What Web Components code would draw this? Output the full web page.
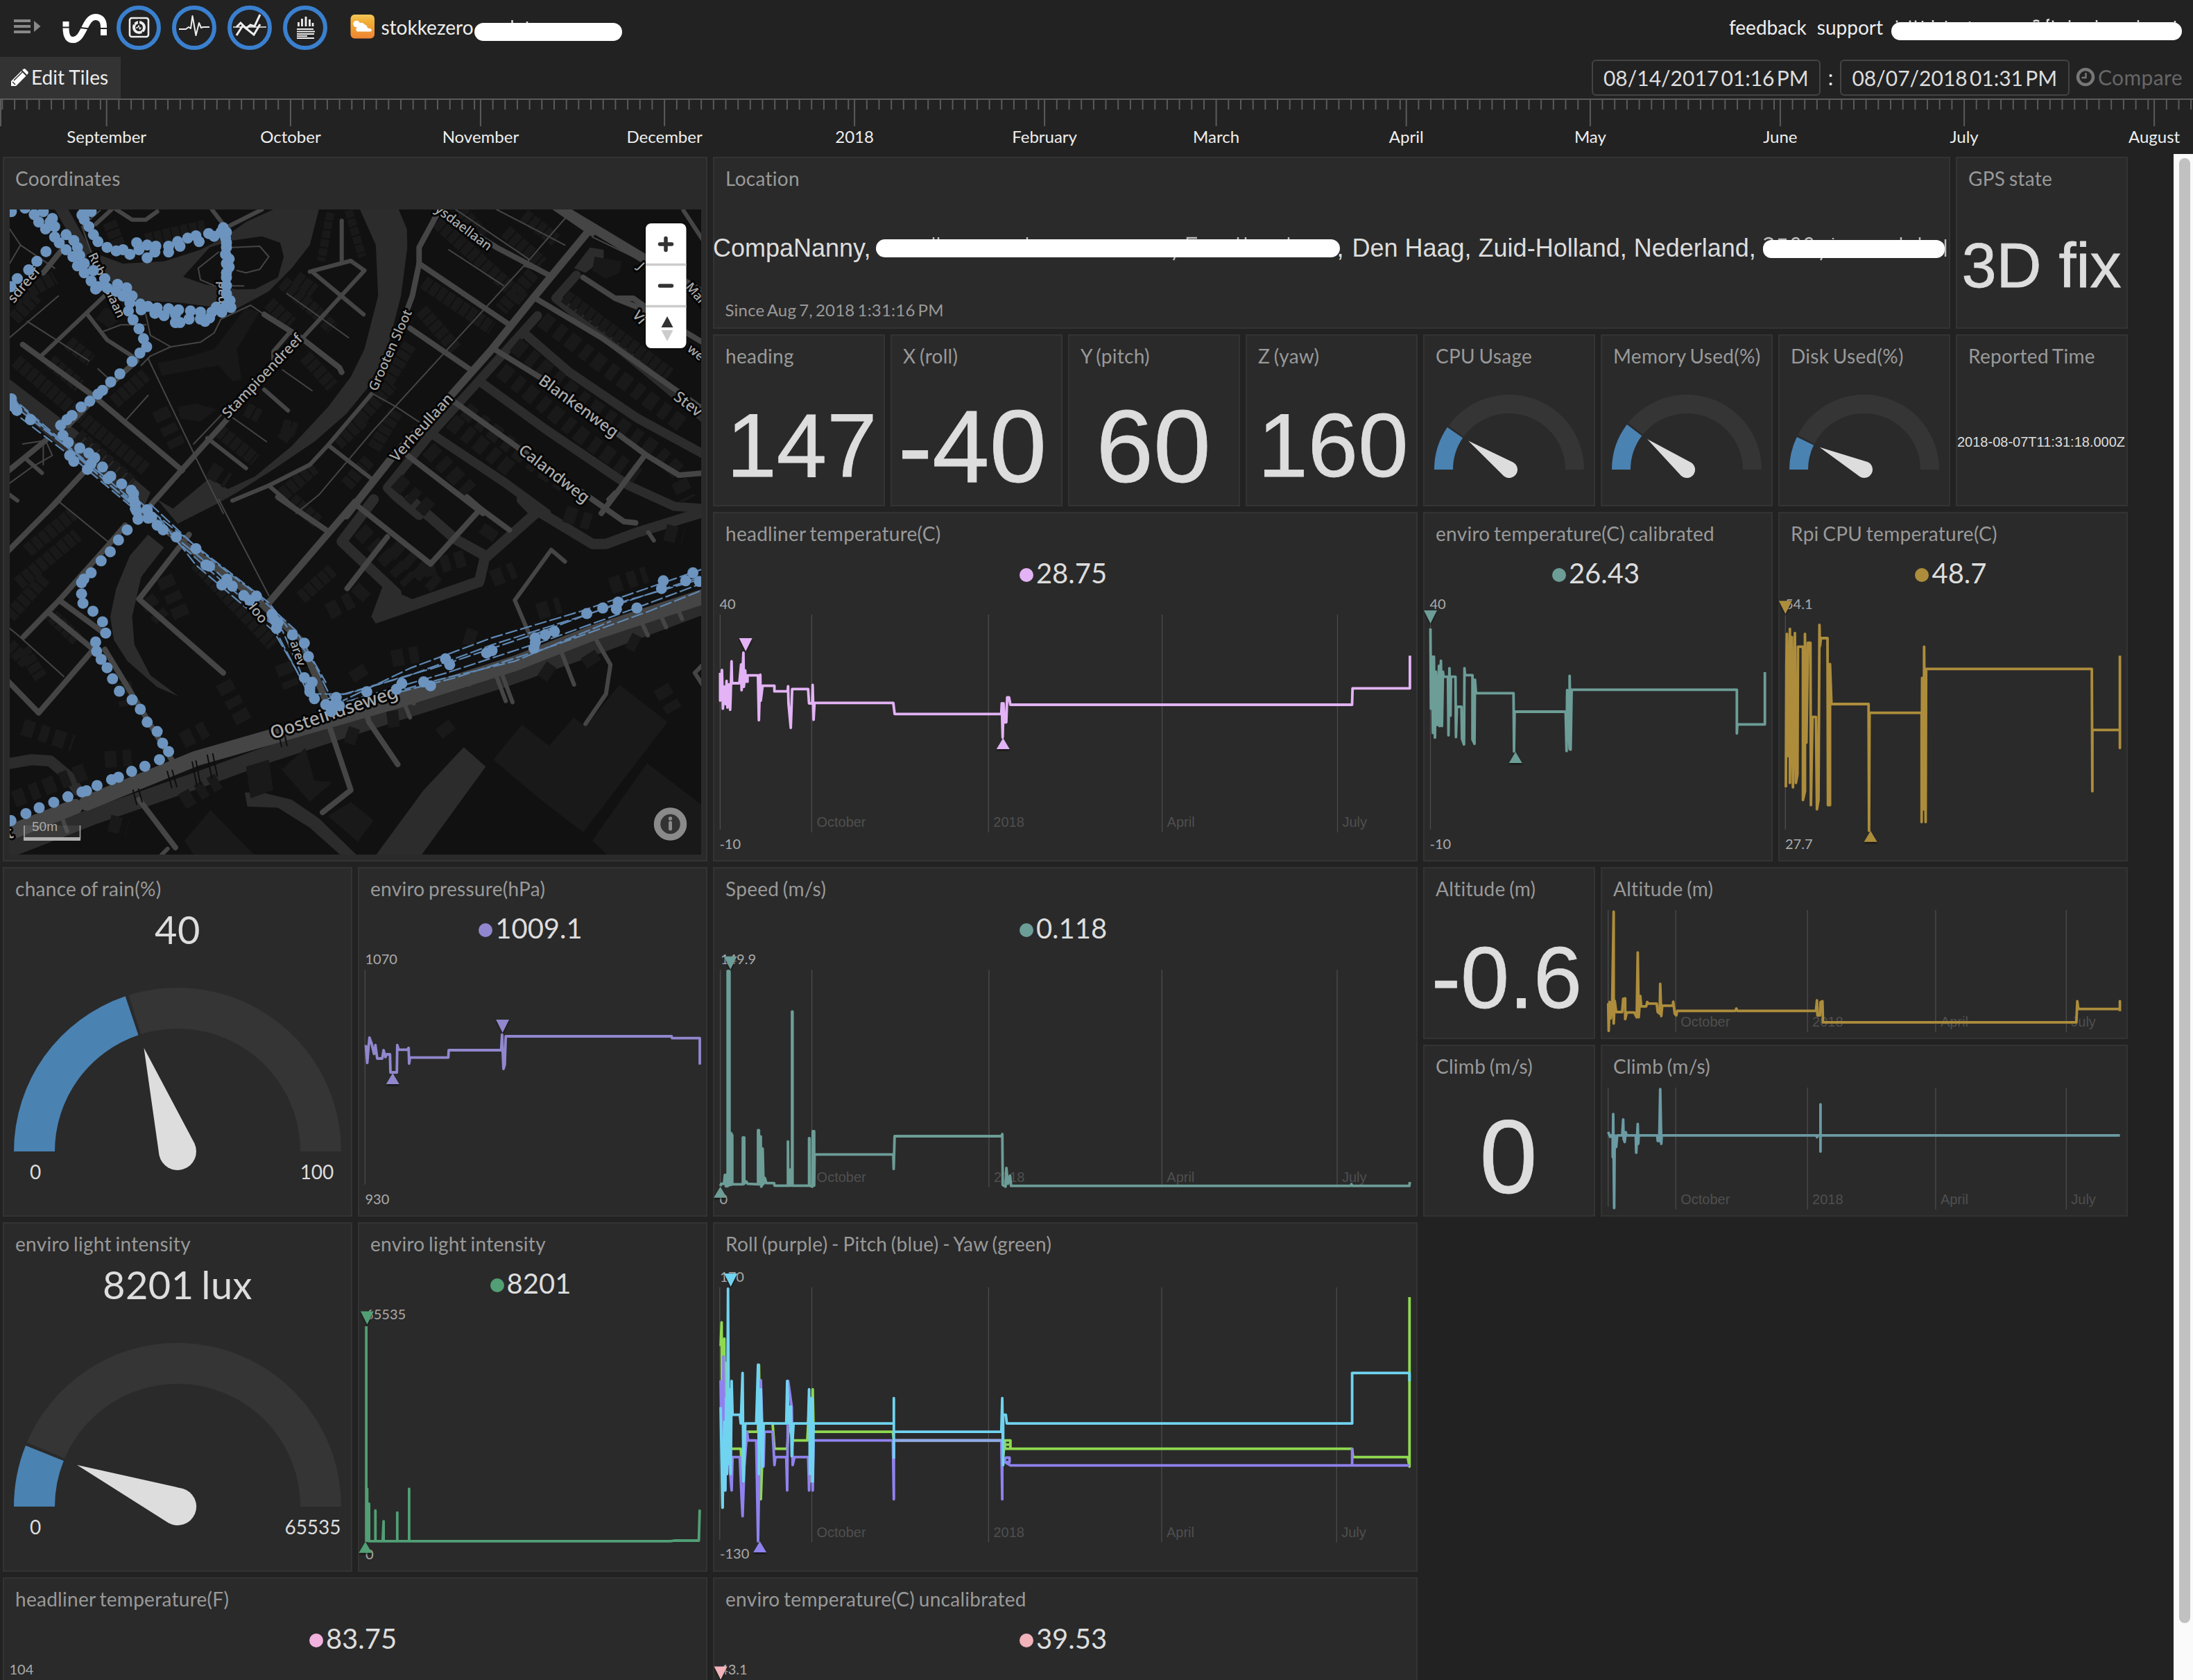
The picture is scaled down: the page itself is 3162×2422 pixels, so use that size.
<!DOCTYPE html>
<html lang="en">
<head>
<meta charset="utf-8">
<title>Dashboard</title>
<style>
html,body{margin:0;height:100%;background:#222;overflow:hidden}
body{font-family:Lato,"Liberation Sans",sans-serif;color:#eee;display:flex;flex-direction:column;height:2422px;width:3162px;font-variant-ligatures:none}
</style>
</head>
<body>
<app-header></app-header>
<app-toolbar></app-toolbar>
<time-ruler></time-ruler>
<dash-board></dash-board>
<script>
const define = (name, html, after) => customElements.define(name, class extends HTMLElement {
  connectedCallback() {
    if (this.shadowRoot) return;
    const root = this.attachShadow({ mode: 'open' });
    root.innerHTML = typeof html === 'function' ? html(this) : html;
    if (after) after(root, this);
  }
});

/* converts "x,y x,y" in a plot's own units to page units */
const frame = (ox, oy, sx, sy) => s => s.trim().split(/\s+/).map(p => {
  const [x, y] = p.split(',').map(Number);
  return (ox + x / sx).toFixed(1) + ',' + (oy + y / sy).toFixed(1);
}).join(' ');

define('ring-button', `<style>:host{display:flex;width:52px;height:52px;border:6px solid #3a80cf;border-radius:50%;align-items:center;justify-content:center}</style><slot></slot>`);

define('redacted-bar', el => `<style>:host{display:block;background:#fff;border-radius:13px;height:26px;width:${el.getAttribute('w')}px}</style>`);

define('app-header', `<style>
:host{display:flex;height:82px;align-items:flex-start;flex:none;font-size:28px;line-height:78px}
svg{display:block;flex:none}
.menu{margin:24px 0 0 20px}.logo{margin:16px 0 0 28px}
.rings{display:flex;gap:16px;margin:8px 0 0 12px}
.sun{margin:20px 0 0 33px}.name{margin-left:8.500px}
.b1{margin:33px 0 0 1px}.right{display:flex;margin-left:auto;gap:15px}
.b2{margin:31.5px 16px 0 -3px}
.peek{position:absolute;overflow:visible;left:0;top:0}
</style>
<svg class="menu" width="40" height="30" fill="#888"><path d="M0 4h24v4H0zM0 12h24v4H0zM0 20h24v4H0zM29 6l9.500 8-9.500 8z"/></svg>
<svg class="logo" width="68" height="48" viewBox="86 16 68 48"><path d="M93 31V40C93 53 97 57.500 103.500 57.500C119 57.500 120 24.500 135.500 24.500C143 24.500 147.500 29 147.500 38V51" fill="none" stroke="#fff" stroke-width="9"/><path d="M88 39.500h10M114 40l13 1.500M142 41h10" stroke="#222" stroke-width="2"/></svg>
<div class="rings">
<ring-button><svg width="50" height="50" fill="none" stroke="#eee"><rect x="12" y="11" width="27" height="27" rx="3" stroke-width="2.600"/><circle cx="25.500" cy="24.500" r="7.500" stroke-width="4"/><path d="M25 12v8M30 31l3 3M19 20l-4-3" stroke="#222" stroke-width="2"/><path d="M21 25h2l2-3 1.500 5 2-2.500" stroke-width="1.300"/></svg></ring-button>
<ring-button><svg width="50" height="50" fill="none" stroke="#eee" stroke-width="2" stroke-linejoin="round"><path d="M3 27h10l4-3 3 2 2.500-18 5 28 4.500-18 3 7 3-1h9"/></svg></ring-button>
<ring-button><svg width="50" height="50" fill="none" stroke="#eee"><path d="M1 24h48" stroke-width="1.500"/><path d="M6 24l6-6 8 8 6-5 6 2 8-17" stroke-width="3"/><path d="M6 36l9-14 16 13 9-15" stroke-width="3"/></svg></ring-button>
<ring-button><svg width="50" height="50" fill="none" stroke="#eee"><path d="M15.500 23v-6M20.500 23v-11M26 23V9M31.500 23v-10M36 23v-5" stroke-width="2.800"/><path d="M13 27h24M13 30.500h26M13 34h25M13 37h15M13 40h25" stroke-width="1.800"/></svg></ring-button>
</div>
<svg class="sun" width="36" height="36"><defs><linearGradient id="g" x2="0" y2="1"><stop stop-color="#f3c85c"/><stop offset=".3" stop-color="#f1ad35"/><stop offset="1" stop-color="#ef8432"/></linearGradient></defs><rect x=".5" y="1" width="34.500" height="34.500" rx="6" fill="url(#g)"/><circle cx="9" cy="14.500" r="4.800" fill="#fff"/><path d="M10 25.500a4 4 0 0 1 0-6.500 6 6 0 0 1 11-3.500 6 6 0 0 1 4 5c7 0 7 5 4 5z" fill="#fff"/></svg>
<span class="name">stokkezero</span><redacted-bar class="b1" w="213"></redacted-bar>
<div class="right"><span>feedback</span><span>support</span><redacted-bar class="b2" w="419"></redacted-bar></div>
<svg class="peek" width="3162" height="60" stroke="#ddd" stroke-width="2.500"><path d="M738.500 29v4M760 31v2M2735 29.500v3M2754 29.500v3M2762 29.500v3M2772 30v3M2787 29v4M2806 30v3M2840 31v2M2932 31c2-2 6-2 8 0M2952 32v-3l3-1M2960 29.500v3M2984 29v4M3023 29v4M3083 29v4M3136 30v3" fill="none"/></svg>`);

define('date-field', `<style>:host{display:block;box-sizing:border-box;width:330.500px;height:52px;border:2px solid #444;border-radius:6px;padding-left:15px;line-height:49px;color:#ddd;white-space:pre;word-spacing:-4.500px}</style><slot></slot>`);

define('app-toolbar', `<style>
:host{display:flex;height:60px;flex:none;font-size:30px;line-height:58px}
.edit{display:flex;background:#333;width:174px;font-size:28px}
.edit svg{margin:17px 4px 0 15px}
.r{display:flex;margin-left:auto;padding-top:4px;line-height:50px}
i{font-style:normal;width:28px;text-align:center}
.cmp{color:#666;display:flex;margin:0 15px 0 9px;letter-spacing:.4px}.cmp svg{margin:11px 4px 0 0}
</style>
<div class="edit"><svg width="26" height="26" viewBox="0 0 26 26" fill="#fff"><path d="M1 25v-7L15.500 3.500l7 7L8 25zM17 2l2-1.500q1.500-1 3 .5l3 3q1.500 1.500.3 3L24 9z"/><path d="M3 19l4 4M5 17l12-12" stroke="#333" stroke-width="1.500"/></svg><span>Edit Tiles</span></div>
<div class="r"><date-field>08/14/2017 01:16 PM</date-field><i>:</i><date-field>08/07/2018 01:31 PM</date-field>
<div class="cmp"><svg width="28" height="28" fill="none" stroke="#777"><circle cx="14" cy="14" r="11" stroke-width="4.500"/><path d="M14.500 8v7h-6" stroke-width="2.500"/></svg><span>Compare</span></div></div>`);

define('time-ruler', () => {
  const months = [['September',30],['October',31],['November',30],['December',31],['2018',31],['February',28],['March',31],['April',30],['May',31],['June',30],['July',31],['August',7]];
  const k = 8.8395; let x = 153.7, d = '', t = '';
  for (let i = 0; i < 9; i++) d += `M${(x - (17 - 2 * i) * k).toFixed(1)} 1v15`;
  for (const [m, n] of months) {
    d += `M${x.toFixed(1)} 1v39`;
    t += `<text x="${x.toFixed(1)}" y="64">${m}</text>`;
    for (let j = 2; j < n; j += 2) d += `M${(x + j * k).toFixed(1)} 1v15`;
    x += n * k;
  }
  return `<style>:host{display:block;height:80px;flex:none}svg{display:block}text{font:24px Lato,sans-serif;fill:#eee;text-anchor:middle}</style>
  <svg width="3162" height="80"><path d="M0 1H3162M1 1v39${d}" stroke="#5a5a5a" stroke-width="2" fill="none"/>${t}</svg>`;
});

/* ---------- plots ---------- */
const F7 = [1020,730,1.5223,3], F8 = [2030,730,1.3852,3], F9 = [0,1240,1.5223,3], F10 = [1020,1240,1.5077,3], F11 = [2030,1240,1.3852,2.9585], F12 = [0,1750,.7612,2.3333];

const tri = (f, p, up, color) => {
  const [x, y] = frame(...f)(p).split(',').map(Number);
  return up ? `<path class="m" d="M${x} ${y}l9.500 16h-19z" fill="${color}"/>` : `<path class="m" d="M${x} ${y}l-9.500-19h19z" fill="${color}"/>`;
};
function chart(o) {
  const f = frame(...o.f), pt = p => f(p).split(',');
  let s = '';
  if (o.axis) { const [x, a, b] = o.axis, p = pt(x + ',' + a), q = pt(x + ',' + b); s += `<path class="g" d="M${p}L${q}"/>`; }
  if (o.grid) {
    const names = ['October', '2018', 'April', 'July'];
    o.grid.x.forEach((x, i) => {
      const p = pt(x + ',' + o.grid.y1), q = pt(x + ',' + o.grid.y2), t = pt(x + ',' + o.grid.ty);
      s += `<path class="g" d="M${p}L${q}"/><text class="mo" x="${+t[0] + 7}" y="${t[1]}">${names[i]}</text>`;
    });
  }
  for (const [v, p] of o.labels || []) { const t = pt(p); s += `<text class="ax" x="${+t[0]-1}" y="${t[1]}">${v}</text>`; }
  for (const [c, p] of o.lines || []) s += `<polyline points="${f(p)}" stroke="${c}"/>`;
  for (const [c, p, up] of o.marks || []) s += tri(o.f, p, up, c);
  return s;
}
function gauge(cx, cy, r, v, needle, hub) {
  const a = Math.PI * (1 - v), ri = r * .75, P = (rad, t) => (cx + rad * Math.cos(t)).toFixed(1) + ' ' + (cy - rad * Math.sin(t)).toFixed(1);
  const arc = (t0, t1, c) => `<path fill="${c}" d="M${P(r,t0)}A${r} ${r} 0 0 1 ${P(r,t1)}L${P(ri,t1)}A${ri} ${ri} 0 0 0 ${P(ri,t0)}z"/>`;
  const g = r > 150 ? 2.5 / r : 1.5 / r;
  return arc(a - g, 0, '#353535') + arc(Math.PI, a + g, '#4a82b2') +
    `<path fill="#ddd" d="M${P(needle,a)}L${P(hub,a-Math.PI/2+.12)}A${hub} ${hub} 0 1 1 ${P(hub,a+Math.PI/2-.12)}z"/>`;
}
const big = (t, x, y, s) => `<text class="big" x="${x}" y="${y}" font-size="${s}">${t}</text>`;
const lim = (t, x, y) => `<text class="lim" x="${x}" y="${y}">${t}</text>`;
const TEAL = '#6d9d97', GOLD = '#ad8d3c', LILAC = '#e3b3f5', VIOLET = '#9187ce', GREEN = '#529f75', SKY = '#70d3ef', LIME = '#8fd94f', IRIS = '#8f82ee';

const tiles = [
 {c:1,r:1,w:4,h:4,t:'Coordinates',map:1},
 {c:5,r:1,w:7,h:1,t:'Location',s:`<g class="loc"><text x="1028" y="370">CompaNanny,</text><text x="1927.500" y="370">,</text><text x="1949.500" y="370">Den Haag, Zuid-Holland, Nederland,</text></g><path d="M1346 345v-3M1353 345v-3M1481 345v-3M1712 345v-2h14M1785 345v-3M1796 345v-3M1858 345v-3M1694 371l-2 4M2627 372l-2 3M2805 345v25M2544 346c3-4 9-4 12 0M2564 345h12M2584 346c3-4 8-4 10 0M2603 346c3-4 8-4 10 0M2643 345v-2M2741 346v-4M2768 346v-4" stroke="#bbb" stroke-width="2.500" fill="none"/><rect x="1263" y="345" width="669" height="26" rx="13" fill="#fff"/><rect x="2542" y="346" width="262" height="26" rx="12" fill="#fff"/><text x="1045.500" y="456" class="since">Since Aug 7, 2018 1:31:16 PM</text>`},
 {c:12,r:1,w:1,h:1,t:'GPS state',s:big('3D fix',2943.500,414,90)},
 {c:5,r:2,w:1,h:1,t:'heading',s:big('147',1156,687,130)},
 {c:6,r:2,w:1,h:1,t:'X (roll)',s:big('-40',1402,695,148)},
 {c:7,r:2,w:1,h:1,t:'Y (pitch)',s:big('60',1663,695,149)},
 {c:8,r:2,w:1,h:1,t:'Z (yaw)',s:big('160',1922,687,130)},
 {c:9,r:2,w:1,h:1,t:'CPU Usage',s:gauge(2176,677,108,.195,72,12)},
 {c:10,r:2,w:1,h:1,t:'Memory Used(%)',s:gauge(2432,677,108,.21,72,12)},
 {c:11,r:2,w:1,h:1,t:'Disk Used(%)',s:gauge(2688,677,108,.148,72,12)},
 {c:12,r:2,w:1,h:1,t:'Reported Time',s:`<text class="rt" x="2822" y="644">2018-08-07T11:31:18.000Z</text>`},
 {c:5,r:3,w:4,h:2,t:'headliner temperature(C)',v:'28.75',dot:LILAC,s:chart({f:F7,axis:[28,468,1398],grid:{x:[229,617,998,1383],y1:468,y2:1410,ty:1387},labels:[['40','28,444'],['-10','28,1482']],
  lines:[[LILAC,'28,720 28,840 32,708 34,875 37,780 40,855 42,755 44,870 47,770 50,880 51,820 53,670 54,765 70,765 74,684 75,795 79,633 80,780 83,710 84,758 88,758 88,731 111,731 113,925 116,728 117,840 121,776 147,776 147,800 176,800 177,778 178,852 183,958 186,790 221,790 223,852 230,852 231,772 233,923 235,850 408,850 411,898 645,898 646,852 648,1000 650,852 652,934 656,934 658,826 662,826 665,858 1415,858 1416,787 1542,787 1542,646']],marks:[[LILAC,'84,627'],[LILAC,'649,1002',1]]})},
 {c:9,r:3,w:2,h:2,t:'enviro temperature(C) calibrated',v:'26.43',dot:TEAL,s:chart({f:F8,axis:[45,468,1398],labels:[['40','45,444'],['-10','45,1482']],
  lines:[[TEAL,'45,528 46,875 48,650 50,980 52,650 54,1000 56,715 59,945 62,690 63,950 66,668 68,950 70,715 71,737 80,737 81,990 83,700 85,905 86,737 95,737 96,998 98,867 107,867 108,1005 112,1030 113,700 114,730 129,730 129,1008 133,1027 134,750 136,808 211,808 212,1060 213,888 315,888 317,1058 318,795 323,1050 323,733 325,1052 327,793 657,793 657,982 658,943 713,943 713,717']],marks:[[TEAL,'45,507'],[TEAL,'215,1062',1]]})},
 {c:11,r:3,w:2,h:2,t:'Rpi CPU temperature(C)',v:'48.7',dot:GOLD,s:chart({f:F8,axis:[754,468,1398],labels:[['54.1','755,444'],['27.7','755,1482']],
  lines:[[GOLD,'755,1215 756,680 757,552 760,1080 763,530 763,1196 767,565 769,1215 773,548 775,1196 778,1158 779,607 789,607 789,1270 793,1232 793,552 796,1022 799,590 804,590 805,1292 808,911 815,911 817,1310 820,1270 822,513 823,605 825,570 838,570 839,1292 843,1292 843,682 846,855 920,855 921,1403 922,893 1026,893 1026,1365 1027,742 1030,1310 1031,607 1034,1365 1035,703 1366,703 1367,1232 1367,967 1422,967 1422,1045 1422,646']],marks:[[GOLD,'754,466'],[GOLD,'924,1403',1]]})},
 {c:1,r:5,w:2,h:2,t:'chance of rain(%)',v:'40',s:gauge(256,1660,236,.4,157,27)+lim('0',51,1700)+lim('100',457,1700)},
 {c:3,r:5,w:2,h:2,t:'enviro pressure(hPa)',v:'1009.1',dot:VIOLET,s:chart({f:F9,axis:[801,475,1403],labels:[['1070','803,450'],['930','803,1487']],
  lines:[[VIOLET,'803,800 806,877 808,830 811,768 816,795 821,838 824,800 828,858 839,858 842,822 846,852 849,840 856,840 857,918 871,918 872,800 875,820 894,820 897,812 898,880 900,854 984,854 985,822 1100,822 1102,754 1105,903 1108,885 1110,762 1474,762 1475,770 1536,770 1536,884']],marks:[[VIOLET,'1103,747'],[VIOLET,'862,921',1]]})},
 {c:5,r:5,w:4,h:2,t:'Speed (m/s)',v:'0.118',dot:TEAL,s:chart({f:F10,axis:[28,475,1403],grid:{x:[227,612,988,1369],y1:475,y2:1415,ty:1392},labels:[['149.9','30,450'],['0','28,1487']],
  lines:[[TEAL,'28,1410 30,1400 36,1400 38,1362 40,1362 40,1410 44,1410 44,480 48,480 48,1405 51,1405 51,1180 54,1190 54,1402 72,1402 77,1402 77,1200 80,1200 80,1400 84,1390 88,1400 110,1402 110,1168 112,1168 112,1402 116,1402 116,1195 117,1412 120,1402 120,1248 122,1400 125,1375 128,1397 145,1397 146,1408 175,1408 175,1217 176,1408 181,1408 181,1338 184,1338 184,655 185,655 185,1408 219,1408 221,1408 221,1203 222,1203 222,1408 228,1412 229,1173 232,1173 232,1408 233,1273 404,1273 405,1336 407,1194 639,1194 641,1185 642,1405 648,1412 650,1332 653,1400 658,1365 660,1409 1398,1409 1400,1402 1402,1409 1526,1409 1527,1392']],marks:[[TEAL,'50,473'],[TEAL,'28,1412',1]]})},
 {c:9,r:5,w:1,h:1,t:'Altitude (m)',s:big('-0.6',2172.500,1453,126)},
 {c:10,r:5,w:3,h:1,t:'Altitude (m)',s:chart({f:F11,axis:[400,213,722],grid:{x:[535,798,1054,1315],y1:213,y2:734,ty:711},
  lines:[[GOLD,'400,610 401,728 403,605 405,675 408,620 411,220 411,697 413,600 416,648 428,648 430,592 434,590 434,678 437,650 452,650 457,670 459,394 461,670 464,580 466,624 476,624 478,605 480,612 497,612 499,648 503,655 504,528 506,665 508,621 529,621 530,604 533,655 536,662 538,643 654,643 656,633 658,643 815,643 817,598 818,662 823,662 824,606 828,602 829,692 1335,692 1337,602 1339,635 1422,635 1422,602 1422,644']]})},
 {c:9,r:6,w:1,h:1,t:'Climb (m/s)',s:big('0',2175,1720,150)},
 {c:10,r:6,w:3,h:1,t:'Climb (m/s)',s:chart({f:F11,axis:[400,970,1478],grid:{x:[535,798,1054,1315],y1:970,y2:1490,ty:1467},
  lines:[['#6b9ba4','400,1160 404,1180 406,1174 409,1174 409,1266 410,1083 412,1484 413,1174 416,1224 418,1174 428,1174 430,1106 431,1190 433,1202 435,1160 437,1174 455,1174 456,1248 459,1125 460,1210 461,1174 498,1174 499,1198 502,1198 504,977 506,1210 507,1174 816,1174 817,1182 819,1174 824,1174 824,1042 824,1243 824,1174 1335,1174 1422,1174']]})},
 {c:1,r:7,w:2,h:2,t:'enviro light intensity',v:'8201 lux',s:gauge(256,2172,236,.125,157,27)+lim('0',51,2212)+lim('65535',451,2212)},
 {c:3,r:7,w:2,h:2,t:'enviro light intensity',v:'8201',dot:GREEN,s:chart({f:F12,labels:[['65535','402,354'],['0','402,1162']],
  lines:[[GREEN,'402,378 402,1100 403,925 403,1100 405,975 405,1101 412,1101 412,998 412,1101 420,1101 421,1034 421,1101 436,1101 436,1005 436,1101 449,1101 449,925 449,1101 736,1101 740,1099 767,1099 768,995']],marks:[[GREEN,'403,372'],[GREEN,'401,1103',1]]})},
 {c:5,r:7,w:4,h:2,t:'Roll (purple) - Pitch (blue) - Yaw (green)',s:chart({f:F12,axis:[790,247,1097],grid:{x:[891,1085,1275,1467],y1:247,y2:1105,ty:1088},labels:[['170','791,229'],['-130','791,1160']],
  lines:[[LIME,'791,445 792,365 793,988 795,420 796,900 798,500 800,790 813,790 815,900 818,733 832,733 833,508 835,960 838,705 848,705 850,790 864,790 866,700 870,762 886,762 888,650 890,900 892,590 893,733 980,733 981,762 1099,762 1100,845 1103,762 1109,762 1109,790 1103,790 1103,776 1109,776 1109,790 1484,790 1485,818 1545,818 1547,850 1547,280'],
  [IRIS,'791,560 793,900 794,480 796,930 798,620 800,820 803,930 804,818 812,818 814,960 815,1017 817,850 820,733 821,762 830,762 832,1101 835,560 838,850 839,733 848,733 850,845 851,818 863,818 864,930 865,562 869,650 870,845 872,818 887,818 888,930 890,620 892,930 893,762 980,762 981,960 981,762 1099,762 1100,960 1100,845 1104,820 1108,820 1108,835 1103,835 1109,846 1484,846 1484,790 1484,846 1547,846'],
  [SKY,'791,650 793,988 795,700 796,930 797,620 798,875 799,252 800,840 801,590 802,875 803,562 804,676 812,676 813,705 815,535 816,900 818,705 830,705 832,507 833,875 835,590 837,850 838,705 863,705 864,562 866,705 868,648 869,815 871,705 887,705 888,590 889,875 891,620 892,900 893,705 981,705 981,620 981,820 981,733 1099,733 1100,620 1101,845 1101,676 1104,676 1105,705 1484,705 1484,535 1547,535 1547,563'],
  ['#8faaea','982,762 1099,762']],marks:[[SKY,'802,245'],[IRIS,'834,1101',1]]})},
 {c:1,r:9,w:4,h:2,t:'headliner temperature(F)',v:'83.75',dot:'#f1b2de',s:chart({f:F12,labels:[['104','11,1550']]})},
 {c:5,r:9,w:4,h:2,t:'enviro temperature(C) uncalibrated',v:'39.53',dot:'#f2b3bb',s:chart({f:F12,labels:[['43.1','791,1550']],marks:[['#f2b3bb','791,1567']]})}
];

const plotCss = `svg{display:block;overflow:visible}.g{stroke:#4c4c4c;stroke-width:1.3}
polyline{fill:none;stroke-width:3.8;stroke-linejoin:round}
.mo{font:20px "Liberation Sans",sans-serif;fill:#4f4f4f}.ax{font:20px Lato,sans-serif;fill:#aaa}
.lim{font:28px Lato,sans-serif;fill:#ddd;text-anchor:middle}.big{font-family:"Liberation Sans",sans-serif;fill:#ddd;stroke:#ddd;stroke-width:.8px;text-anchor:middle}
.loc{font:36px "Liberation Sans",sans-serif;fill:#ddd}.since{font:24px Lato,sans-serif;fill:#999;letter-spacing:.2px;word-spacing:-2.300px}.rt{font:20px "Liberation Sans",sans-serif;fill:#ddd}
.m{filter:drop-shadow(0 2px 1px #0008)}`;

define('dash-tile', el => `<style>:host{display:block;box-sizing:border-box;border:2px solid #333;background:#2a2a2a;min-width:0;min-height:0}
h2{margin:0;padding-left:16px;font:28px/58px Lato,sans-serif;color:#999;white-space:nowrap;letter-spacing:.28px;word-spacing:-1.800px}
.v{display:flex;align-items:center;justify-content:center;height:57px;color:#ddd;font-size:40px;line-height:59px;padding-right:6px}
.v.l{font-size:56px;height:60px;line-height:60px;padding:0;letter-spacing:.4px;word-spacing:-4px}
.v i{width:20px;height:20px;border-radius:50%;margin:4px 4px 0 0;background:${el.getAttribute('dot') || 'none'}}
</style><h2>${el.getAttribute('heading')}</h2>${el.hasAttribute('value') ? `<div class="v${el.hasAttribute('dot') ? '' : ' l'}">${el.hasAttribute('dot') ? '<i></i>' : ''}<span>${el.getAttribute('value')}</span></div>` : ''}<slot></slot>`);

/* ---------- street map ---------- */
define('street-map', () => {
  const A = frame(0,220,1.5223,3), B = frame(0,720,1.5223,2.9585);
  const ln = (f, w, c, arr, x = '') => arr.map(p => `<polyline points="${f(p)}" stroke="${c}" stroke-width="${w}" ${x}/>`).join('');
  const pg = (f, c, arr) => arr.map(p => `<polygon points="${f(p)}" fill="${c}"/>`).join('');
  const W = '#2c2c2c', R = '#454545', H = '#191919';
  const dots = (f, s) => f(s).split(' ').map(p => { const [x, y] = p.split(','); return `<circle cx="${x}" cy="${y}" r="8"/>`; }).join('');
  const lab = (t, x, y, a, s = 22) => `<text transform="translate(${x} ${y}) rotate(${a})" font-size="${s}">${t}</text>`;
  const homes = 'stroke-dasharray="11 2" class="flat"', villas = 'stroke-dasharray="17 9 13 8" class="flat"';
  return `<style>:host{display:block;width:997px;height:930px;margin:16px 0 0 8px}
  svg{display:block;background:#111}polyline{fill:none;stroke-linejoin:round;stroke-linecap:round}polyline.flat{stroke-linecap:butt;stroke-linejoin:bevel}
  .n{font-family:"Noto Sans","Open Sans",sans-serif;font-weight:500;fill:#aaa;stroke:#050505;stroke-width:6px;paint-order:stroke;stroke-linejoin:round}
  .d{fill:#6c94be}</style>
  <svg width="997" height="930" viewBox="14 302 997 930">
  ${pg(A, W, ['790,246 875,246 893,330 894,410 880,620 850,850 810,1010 760,1130 690,1250 600,1370 520,1470 475,1520 390,1605 345,1500 380,1540 460,1408 500,1455 560,1400 640,1270 720,1100 770,970 800,850 830,620 825,400',
    '600,246 700,246 680,400 640,500 590,600 515,680 400,650 310,640 240,560 215,440 270,480 360,470 440,420 490,370 540,300','120,246 150,246 240,560 290,660 260,640 190,480','21,980 200,1250 330,1470 310,1560 130,1270 21,1080','1260,500 1295,410 1325,420 1325,460 1285,520'])}
  ${pg(A, '#111', ['402,537 460,410 510,380 575,362 615,390 623,450 610,540 560,590 520,592 450,570'])}
  ${ln(A, 13, W, ['1265,530 1220,630 1380,880 1570,1190','1150,780 1250,950 1400,1150 1550,1310','1060,1000 1200,1200 1380,1440 1480,1530 1550,1540','950,1220 1110,1430 1200,1560','1180,705 1050,990 940,1230 850,1450 870,1490 920,1570'])}
  ${pg(B, W, ['325,150 360,205 310,330 290,500 295,620 330,750 392,840 345,800 280,690 250,600 242,500 255,380 285,240','820,1530 930,1240 1018,1057 1066,1140 920,1530','537,1250 580,1252 640,1280 700,1360 790,1530 755,1530 680,1400 610,1315 543,1310','840,370 905,425 1045,330 1060,370 825,530 815,500'])}
  ${ln(B, 15, W, ['820,0 750,180 870,400','1052,350 1065,240 1000,170 900,0','1065,250 1175,60 1145,0','1190,60 1300,190 1330,190 1400,140 1550,50'])}${ln(B, 16, W, ['10,1130 70,1110 110,1115 150,1180 170,1240'])}
  ${ln(B, 24, W, ['10,1500 200,1355 430,1200 600,1080 870,910 1100,770 1330,610 1550,450'])}
  ${ln(A, 20, H, ['30,640 120,540','30,720 80,620','110,900 175,1010','150,820 200,900','35,900 200,1180 320,1370','170,1220 290,1430','250,1080 320,960','480,1200 560,1330','540,1110 570,1140','620,1180 650,1200','620,560 700,700','590,650 640,740','700,700 730,760','650,540 690,600','670,880 730,1010','960,300 1150,640','930,560 1080,760','925,680 1000,850','850,990 900,830','790,1150 860,1000','740,1260 800,1150','1170,520 1100,680','1240,620 1470,960','1110,340 1190,480','1010,250 1060,360','1150,270 1220,380','820,1280 870,1120','760,1440 810,1330','620,1480 690,1360','240,300 260,400','320,380 450,320'], homes)}
  ${ln(A, 12, H, ['725,260 705,470','765,250 795,450'], homes)}
  ${ln(A, 24, H, ['1130,830 1280,1070 1440,1290 1500,1400','1100,940 1280,1230 1400,1400','1020,1110 1180,1360 1250,1450','990,1160 1120,1370','940,1280 1040,1480','870,1420 950,1560','1190,720 1330,930 1500,1180','1490,1420 1510,1500','460,1370 500,1420','620,1200 640,1230','350,1110 390,1270'], villas)}
  ${pg(A, '#181818', ['345,910 400,890 470,850 540,670 570,690 520,850 530,980 510,990 480,920 355,965','390,1100 430,1085 475,1110 440,1165 395,1150','1305,450 1365,470 1360,520 1330,545 1300,510','230,670 275,700 240,760 210,720'])}
  ${ln(B, 20, H, ['60,220 160,60','40,360 170,150','20,500 100,330','100,470 170,600','50,640 90,760','20,620 60,700','430,270 600,620','640,0 700,100','660,420 730,300','600,560 620,500'], homes)}
  ${ln(B, 24, H, ['790,130 900,350','860,200 960,370','930,300 1020,250','720,480 780,420 810,360','1080,340 1130,300','1180,480 1230,450','360,330 400,500','320,420 360,520','270,780 280,880','620,700 640,800','690,760 700,830','490,780 540,960','780,720 800,780','860,680 920,660','1020,580 1050,600','1190,720 1220,760','1290,660 1310,720','1340,370 1420,320','1380,600 1400,620','850,940 890,930','760,1000 790,1020','970,960 990,1010','30,1280 200,1150','400,1030 460,970','50,970 160,1040','230,1110 300,1100','400,1290 480,1200','1460,140 1500,160','1080,120 1060,180','1240,60 1300,100','1450,800 1480,900','240,1380 280,1400'], villas)}
  ${pg(B, '#191919', ['1083,1110 1145,960 1205,1050 1260,930 1285,970 1360,790 1465,950 1280,1420 1180,1270','1300,1455 1420,1125 1545,1310 1545,1530 1340,1530','405,1455 462,1325 565,1530 430,1530','540,1140 590,1110 600,1240 550,1275','600,1110 620,1150 670,1060 690,1200 730,1205 680,1290','720,1350 770,1290 820,1370 785,1460'])}
  ${ln(A, 2, R, ['325,890 430,1320 490,1560','985,420 1105,575','1150,490 820,1200 700,1480 650,1560','1150,490 1210,530','820,1045 870,1100 920,1165','1240,285 1150,490','1000,246 1160,460','1090,246 1240,400','630,610 765,800','620,940 685,1030','510,1145 585,1250','600,900 425,1260','128,620 21,800','60,730 195,900','21,330 45,400 21,480','45,400 120,500','215,935 240,980','325,1050 275,1160','50,1260 100,1245 115,1310 70,1360 21,1430','95,1260 95,1350','320,700 330,790 375,840 440,820 470,780 485,720 550,660 580,700','375,840 330,880 310,920','225,775 265,745 320,745','510,410 570,405 590,450 570,505 540,520 520,510','480,430 435,500 440,550 470,575 535,577','180,320 220,250','200,430 180,320','1300,365 1400,460 1440,490'])}
  ${ln(A, 6, R, ['750,295 750,470','680,515 770,468 800,510 665,800','685,515 798,700','635,780 600,860 600,900','580,1025 632,1115','455,1235 540,1365','60,1330 92,1385','190,695 235,810 290,880','232,615 90,880','815,1045 720,1265 680,1350 590,1440 510,1505','720,1265 815,1410','590,1440 660,1560','255,246 290,290 320,290 345,255','465,246 490,310','575,246 500,320','1500,250 1550,400','245,246 210,310','21,1480 38,1505'])}
  ${ln(A, 8, R, ['965,246 920,410 920,480 905,620 890,700','960,250 1090,410 1205,530','920,480 1115,740','900,760 1030,935','1175,630 1320,800 1500,1050 1550,1120','1085,850 1200,990 1420,1310 1490,1395 1550,1385','995,1075 1140,1280 1330,1540','1415,1310 1320,1560','895,1310 1060,1560','580,700 660,800 745,930 750,950','50,830 210,1060 400,1375','500,1150 400,1370 310,1570','300,900 210,1060 150,1180','140,410 95,520','100,1245 10,1390','185,1380 100,1560','1280,540 1350,630 1440,700 1550,830','1355,630 1390,630 1440,700'])}
  ${ln(A, 11, R, ['1300,320 1170,630 1080,850 990,1050 860,1320 760,1570'])}${ln(A, 14, R, ['1225,235 1310,335 1550,620'])}${ln(A, 8, R, ['1215,235 1300,350'])}
  ${ln(B, 2, R, ['480,0 590,410','130,10 240,185','40,580 140,755','21,550 40,580'])}
  ${ln(B, 8, R, ['130,0 15,225','275,110 240,190 130,430 52,585','130,430 235,580','105,480 205,640 85,910 15,770','415,150 305,425 490,740','610,-10 715,130','780,20 945,275 1055,40 1025,-10','1055,40 1118,130','850,160 762,380','230,640 380,1120','725,980 770,1240 708,1335','305,1280 385,1485','800,890 810,950 873,1130','1300,0 1370,95 1395,100'])}
  ${ln(B, 6, R, ['1240,265 1210,215 1130,430 1165,590','1300,570 1340,705 1330,830 1285,958','1228,630 1260,790','1083,720 1110,860','1095,710 1125,865','885,860 900,930','903,840 908,870','1400,490 1422,580','1442,460 1462,545','1482,440 1497,510','1360,510 1368,550','1025,750 1030,790','1423,140 1435,175','1335,0 1350,-30','1550,690 1525,740 1545,800','355,1515 368,1490','135,1350 147,1415'])}
  ${ln(B, 10, R, ['780,10 590,440','310,50 560,420 660,600 720,880'])}
  ${ln(B, 22, R, ['10,1430 165,1310','190,1295 430,1105 600,1010 870,860 1130,700 1300,570 1550,410'])}
  ${ln(B, 2, '#0e0e0e', ['430,1115 440,1215','422,1120 432,1220','455,1090 465,1190','467,1085 477,1180','367,1160 377,1230','378,1155 388,1225','613,1010 618,1055','625,1005 630,1050','292,1240 300,1300','304,1235 312,1290'])}
  ${ln(A, 2.2, '#5f88b3', ['21,1050 150,1270 300,1520','21,1080 170,1310 310,1560','30,1070 190,1350 320,1570','21,1110 160,1320 330,1600','60,1130 240,1420'], 'stroke-dasharray="14 7"')}
  ${ln(B, 2.2, '#5f88b3', ['280,-30 470,260 590,440 690,700 730,860','270,-20 460,280 600,540 680,840','330,20 440,220 560,400 650,560 715,780','350,80 430,280 600,560 660,760','300,30 500,370 620,560 690,870','680,830 760,830 900,750 1080,620 1290,490 1538,330','730,880 980,740 1200,600 1400,460 1538,360','740,870 900,720 1080,590 1270,480 1538,300','780,870 1000,760 1220,620 1420,480 1538,390','720,850 950,720 1180,570 1360,440 1538,340','760,880 960,770 1130,690 1340,520'], 'stroke-dasharray="16 6"')}
  <g class="n">${lab('Stampioendreef',329,604,-46.5,20.5)}${lab('Grooten Sloot',543,565,-66,19)}${lab('Verheullaan',572,667,-48,21.5)}${lab('Blankenweg',775,552,36,23)}${lab('Calandweg',746,652,37.5,23)}${lab('ysdaellaan',626,304,37,19)}${lab('Oosteindseweg',393,1066,-18.5,26)}${lab('Rubenslaan',127,368,65,18)}${lab('sdreef',20,438,-50,20)}${lab('Stev',970,575,37,22)}${lab('Vi',911,455,50,20)}${lab('Marn',988,414,50,18)}${lab('we',990,505,40,18)}${lab('Hoo',352,869,52,20)}${lab('arev',418,926,72,18)}${lab('pad',325,438,-90,18)}${lab('J',918,386,45,18)}${lab('t',12,1210,-20,24)}</g>
  <g class="d">${dots(A,'25,255 55,240 95,255 75,268 85,300 110,300 100,330 120,320 115,285 120,365 145,355 130,390 162,380 145,420 170,410 160,450 175,445 170,490 185,480 185,520 205,510 200,555 215,580 210,590 230,545 235,585 258,570 255,600 278,585 270,620 290,620 285,650 308,655 282,685 310,680 325,665 345,672 340,695 370,675 360,705 392,680 385,700 385,735 395,735 418,685 415,720 440,690 440,720 450,730 465,690 460,715 475,668 487,690 507,670 185,255 200,255 180,270 185,290 195,320 205,355 215,385 235,410 255,425 270,420 285,440 300,390 305,420 323,400 323,455 342,405 340,430 370,405 370,430 390,385 395,405 412,370 430,360 437,385 458,350 470,362 490,325 497,345 485,345 495,370 497,390 497,410 495,440 503,460 497,480 503,495 497,520 497,540 497,575 497,610 505,640 497,660 101,428 81,470 63,507 38,545 24,580 292,723 305,762 315,805 322,840 307,867 290,903 263,957 243,992 225,1028 215,1045 197,1075 178,1100 158,1137 147,1155 133,1180 138,1223 150,1253 175,1278 153,1310 162,1335 195,1300 208,1320 200,1345 192,1370 225,1360 237,1410 243,1400 267,1433 288,1460 293,1475 293,1500 297,1540 323,1545 25,1065 37,1115 67,1155 28,1095')}
  ${dots(B,'297,20 300,50 323,45 303,85 325,80 333,75 345,110 358,130 387,160 430,210 452,280 460,285 498,340 487,365 510,370 535,410 548,430 563,412 597,490 610,525 603,515 607,550 642,578 668,613 677,670 668,760 685,780 680,820 680,805 690,850 715,875 730,880 738,845 727,905 745,880 279,130 260,173 242,223 222,262 200,313 184,340 179,355 179,403 182,443 204,477 225,522 232,570 210,608 212,648 222,682 235,718 247,765 262,818 290,855 308,895 323,950 345,990 357,1040 370,1075 350,1110 318,1138 289,1160 260,1185 245,1195 213,1220 180,1248 190,1243 149,1268 118,1292 86,1315 57,1340 24,1370 805,820 870,810 882,785 930,778 945,795 978,680 987,705 1068,655 1080,645 1172,635 1175,610 1175,590 1197,577 1217,563 1288,487 1323,463 1353,468 1357,438 1398,463 1452,380 1456,347 1505,347 1521,313 1535,350')}</g>
  <rect x="34" y="1190" width="82" height="20" fill="#fff1"/><path d="M35 1190v20M115.500 1190v20" stroke="#aaa" stroke-width="1.500"/><path d="M34 1209.500h82" stroke="#b0b0b0" stroke-width="5"/><text x="46" y="1197.500" font-size="19" font-family="Liberation Sans" fill="#aaa">50m</text>
  <circle cx="966.500" cy="1188" r="19" fill="#333" stroke="#8a8a8a" stroke-width="9.500"/><path d="M966.500 1186v9" stroke="#8a8a8a" stroke-width="5" stroke-linecap="round"/><circle cx="966.500" cy="1180" r="2.700" fill="#8a8a8a"/>
  <rect x="929.500" y="321" width="61.500" height="183" rx="9" fill="#0004"/><rect x="931" y="322" width="58.500" height="180" rx="8" fill="#fff"/><path d="M931 381.500h58.500M931 441.500h58.500" stroke="#ccc" stroke-width="3.500"/><path d="M960 343.500v17M951.500 352h17M951.500 412h17" stroke="#333" stroke-width="5.500" stroke-linecap="round"/><path d="M962 456l8.500 16h-17z" fill="#333"/><path d="M962 492l8.500-16h-17z" fill="#ccc"/>
  </svg>`;
});

define('dash-board', () => `<style>
:host{display:flex;flex:1;min-height:0;overflow:hidden}
.grid{flex:1;display:grid;grid-template-columns:repeat(12,248px);grid-auto-rows:248px;gap:8px;padding:4px;align-content:start}
.bar{width:28px;background:#fafafa;box-sizing:border-box;padding:6px 4px 0 8px}.bar div{height:2112px;border-radius:8px;background:#c1c1c1}
${plotCss}
</style><div class="grid">${tiles.map(o => {
  const x = 4 + (o.c - 1) * 256, y = 226 + (o.r - 1) * 256, w = o.w * 256 - 8, h = o.h * 256 - 8;
  const hd = 58 + (o.v ? (o.dot ? 57 : 60) : 0);
  const body = o.map ? '<street-map></street-map>' : `<svg width="${w - 4}" height="${h - 4 - hd}" viewBox="${x + 2} ${y + 2 + hd} ${w - 4} ${h - 4 - hd}">${o.s}</svg>`;
  return `<dash-tile heading="${o.t}"${o.v ? ` value="${o.v}"` : ''}${o.dot ? ` dot="${o.dot}"` : ''} style="grid-area:${o.r}/${o.c}/span ${o.h}/span ${o.w}">${body}</dash-tile>`;
}).join('')}</div><div class="bar"><div></div></div>`);
</script>
</body>
</html>
